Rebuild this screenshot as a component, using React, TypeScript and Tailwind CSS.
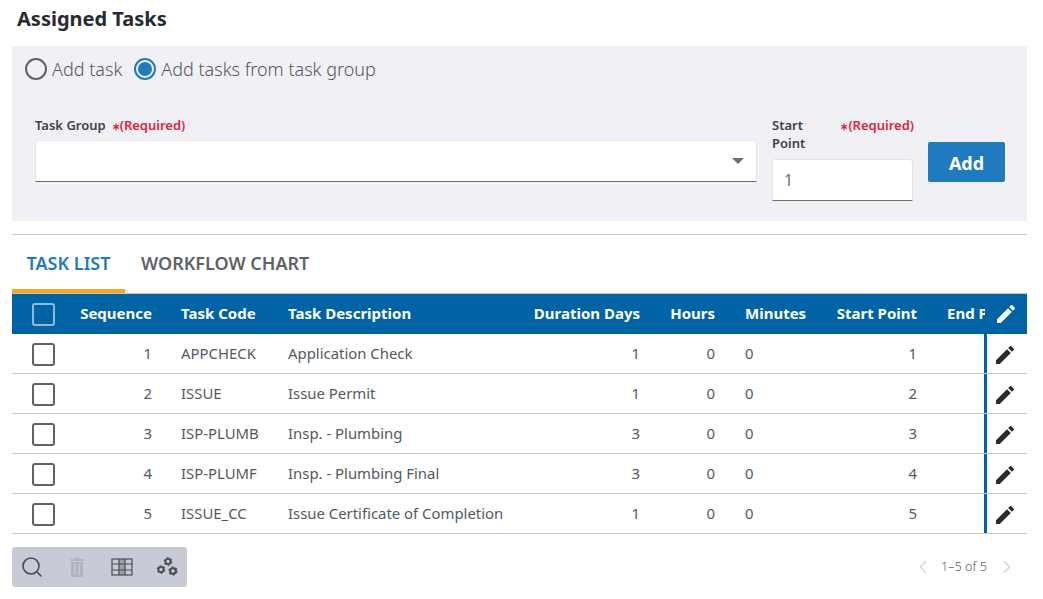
import { ChevronLeft, ChevronRight, Search } from 'lucide-react';

const tasks = [
  { seq: 1, code: 'APPCHECK', desc: 'Application Check', days: 1, start: 1 },
  { seq: 2, code: 'ISSUE', desc: 'Issue Permit', days: 1, start: 2 },
  { seq: 3, code: 'ISP-PLUMB', desc: 'Insp. - Plumbing', days: 3, start: 3 },
  { seq: 4, code: 'ISP-PLUMF', desc: 'Insp. - Plumbing Final', days: 3, start: 4 },
  { seq: 5, code: 'ISSUE_CC', desc: 'Issue Certificate of Completion', days: 1, start: 5 },
];

const PENCIL =
  'M3 17.25V21h3.75L17.81 9.94l-3.75-3.75L3 17.25zM20.71 7.04c.39-.39.39-1.02 0-1.41l-2.34-2.34a.9959.9959 0 0 0-1.41 0l-1.83 1.83 3.75 3.75 1.83-1.83z';

function Pencil({ className }: { className: string }) {
  return (
    <svg viewBox="0 0 24 24" className={className} fill="currentColor">
      <path d={PENCIL} />
    </svg>
  );
}

function Gear({ x, y, r }: { x: number; y: number; r: number }) {
  return (
    <g>
      <circle cx={x} cy={y} r={r} fill="none" stroke="currentColor" strokeWidth={r * 0.7} />
      <circle cx={x} cy={y} r={r * 1.4} fill="none" stroke="currentColor" strokeWidth={r * 0.5} strokeDasharray={`${r * 0.8} ${r * 0.66}`} />
    </g>
  );
}

function Radio({ checked, label }: { checked?: boolean; label: string }) {
  return (
    <label className="flex items-center gap-[5px]">
      <span
        className={`flex h-[22px] w-[22px] items-center justify-center rounded-full border-2 ${
          checked ? 'border-[#1f7bbd]' : 'border-[#5f6368]'
        }`}
      >
        {checked && <span className="h-[14px] w-[14px] rounded-full bg-[#1f7bbd]" />}
      </span>
      <span>{label}</span>
    </label>
  );
}

function Box({ light }: { light?: boolean }) {
  return (
    <span
      className={`block h-[23px] w-[23px] rounded-[3px] border-2 ${
        light ? 'border-[#8fbbdb]' : 'border-[#5f6368]'
      }`}
    />
  );
}

function Required() {
  return (
    <span className="text-[13px] font-semibold text-[#e0243a]">
      <span className="text-[10px] font-bold">∗</span>(Required)
    </span>
  );
}

export default function App() {
  return (
    <div className="h-[599px] w-[1043px] overflow-hidden bg-white font-['Open_Sans',sans-serif] text-[15px] text-[#55595e]">
      <div className="pl-[12px] pr-[16px]">
        <h1 className="h-[46px] pl-[5px] pt-[4px] text-[20px] leading-[30px] font-bold text-[#272b30]">Assigned Tasks</h1>

        <section className="h-[175px] bg-[#f0f0f5] px-[12px] pt-[12px]">
          <div className="flex h-[22px] items-center gap-[12px] pl-[1px] text-[18px] leading-[22px] font-light text-[#55595e]">
            <Radio label="Add task" />
            <Radio checked label="Add tasks from task group" />
          </div>

          <div className="mt-[36px] flex items-start pl-[11px]">
            <div className="w-[722px]">
              <div className="flex h-[20px] items-center gap-[6px] text-[13px] font-semibold text-[#3d4146]">
                Task Group <Required />
              </div>
              <div className="mt-[4px] flex h-[42px] items-center justify-end rounded-t-[3px] border border-b-[#6b6f73] border-[#e4e4e8] bg-white pr-[12px]">
                <span className="h-0 w-0 border-x-[6px] border-t-[6px] border-x-transparent border-t-[#6b6f73]" />
              </div>
            </div>

            <div className="ml-[15px] w-[141px]">
              <div className="flex h-[38px] justify-between text-[13px] leading-[18px] font-semibold text-[#3d4146]">
                <span className="w-[50px]">Start Point</span>
                <span className="mr-[-1px] whitespace-nowrap">
                  <Required />
                </span>
              </div>
              <div className="mt-[5px] flex h-[42px] items-center rounded-t-[3px] border border-b-[#6b6f73] border-[#e4e4e8] bg-white pl-[11px] text-[16px] text-[#6b6f73]">
                1
              </div>
            </div>

            <button className="ml-[15px] mt-[26px] h-[40px] w-[77px] rounded-[2px] bg-[#1f7bbd] pt-[2px] text-[18px] font-bold text-white">
              Add
            </button>
          </div>
        </section>

        <div className="mt-[13px] border-t border-[#c8c8c8]" />

        <nav className="flex h-[59px] border-b border-[#c8c8c8] text-[18px] font-semibold">
          <div className="flex h-[58px] w-[113px] items-center justify-center border-b-[4px] border-[#f5a623] pt-[2px] text-[#1f7bbd]">
            TASK LIST
          </div>
          <div className="flex h-[54px] items-center pl-[16px] pt-[2px] text-[#5f6368]">WORKFLOW CHART</div>
        </nav>

        <div className="w-[1015px]">
          <div className="flex h-[40px] items-center bg-[#0063a3] pb-[2px] font-bold text-white">
            <div className="flex w-[55px] shrink-0 items-center pl-[20px] pt-[2px]">
              <Box light />
            </div>
            <div className="w-[100px] shrink-0 pr-[15px] text-right">Sequence</div>
            <div className="w-[107px] shrink-0 pl-[14px]">Task Code</div>
            <div className="w-[244px] shrink-0 pl-[14px]">Task Description</div>
            <div className="w-[137px] shrink-0 pr-[15px] text-right">Duration Days</div>
            <div className="w-[75px] shrink-0 pr-[15px] text-right">Hours</div>
            <div className="w-[91px] shrink-0 pl-[15px]">Minutes</div>
            <div className="w-[111px] shrink-0 pr-[15px] text-right">Start Point</div>
            <div className="w-[53px] shrink-0 overflow-hidden pl-[15px] whitespace-nowrap">End Point</div>
            <div className="flex w-[42px] shrink-0 items-center justify-center pt-[2px]">
              <Pencil className="h-[24px] w-[24px] text-white" />
            </div>
          </div>

          {tasks.map((t) => (
            <div key={t.seq} className="flex h-[40px] items-center border-b border-[#c8c8c8] pb-[1px] text-[14.9px]">
              <div className="flex w-[55px] shrink-0 items-center pl-[20px] pt-[2px]">
                <Box />
              </div>
              <div className="w-[100px] shrink-0 pr-[15px] text-right">{t.seq}</div>
              <div className="w-[107px] shrink-0 pl-[14px]">{t.code}</div>
              <div className="w-[244px] shrink-0 pl-[14px] whitespace-nowrap">{t.desc}</div>
              <div className="w-[137px] shrink-0 pr-[15px] text-right">{t.days}</div>
              <div className="w-[75px] shrink-0 pr-[15px] text-right">0</div>
              <div className="w-[91px] shrink-0 pl-[15px]">0</div>
              <div className="w-[110px] shrink-0 pr-[14px] text-right">{t.start}</div>
              <div className="w-[53px] shrink-0" />
              <div className="mb-[-1px] flex h-[39px] w-[43px] shrink-0 items-center justify-center border-l-[3px] border-[#0063a3] pr-[5px] pt-[2px]">
                <Pencil className="h-[24px] w-[24px] text-[#272b30]" />
              </div>
            </div>
          ))}
        </div>

        <footer className="mt-[13px] flex items-center justify-between">
          <div className="flex h-[40px] w-[175px] items-center rounded-[3px] bg-[#c8cad6] pl-[8px] text-[#4a4d52]">
            <Search className="h-[24px] w-[24px]" strokeWidth={1.6} />
            <svg viewBox="0 0 24 24" className="ml-[21px] h-[24px] w-[24px] text-[#b2b4bf]" fill="currentColor">
              <path d="M5 4h4.5l1-1.5h3l1 1.5H19v2H5zM6 7h12v13.5a1.5 1.5 0 0 1-1.5 1.5h-9A1.5 1.5 0 0 1 6 20.5zm3 2v11h1.5V9zm4.5 0v11H15V9z" fillRule="evenodd" />
            </svg>
            <svg viewBox="0 0 22 18" className="ml-[22px] h-[18px] w-[22px]" fill="none" stroke="currentColor" strokeWidth="1.2">
              <rect x="8" y="1" width="6" height="16" fill="#9ea0aa" stroke="none" />
              <rect x="1" y="1" width="20" height="16" />
              <path d="M1 6h20M1 12h20M8 1v16M14 1v16" />
            </svg>
            <svg viewBox="0 0 24 24" className="ml-[22px] h-[24px] w-[24px]">
              <Gear x={13} y={6.5} r={2.6} />
              <Gear x={6} y={14.5} r={2.6} />
              <Gear x={18} y={16} r={2.8} />
            </svg>
          </div>
          <div className="flex items-center pr-[9px] text-[12.7px] font-light text-[#55595e]">
            <ChevronLeft className="h-[22px] w-[22px] text-[#d4d4d8]" strokeWidth={1.6} />
            <span className="ml-[7px] mr-[9px]">1–5 of 5</span>
            <ChevronRight className="h-[22px] w-[22px] text-[#d4d4d8]" strokeWidth={1.6} />
          </div>
        </footer>
      </div>
    </div>
  );
}
